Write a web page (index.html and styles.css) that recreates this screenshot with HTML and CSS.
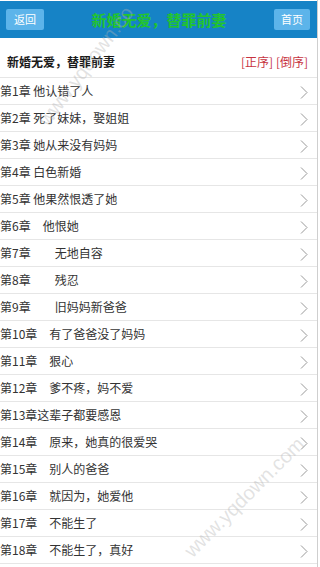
FILE: index.html
```html
<!DOCTYPE html>
<html lang="zh-CN">
<head>
<meta charset="utf-8">
<title>新婚无爱，替罪前妻</title>
<link rel="stylesheet" href="styles.css">
</head>
<body>
<div class="page">
  <header class="topbar">
    <a class="btn btn-back" href="#">返回</a>
    <h1 class="title">新婚无爱，替罪前妻</h1>
    <a class="btn btn-home" href="#">首页</a>
  </header>
  <div class="bookhead">
    <h2 class="bookname">新婚无爱，替罪前妻</h2>
    <div class="order"><a href="#">[正序]</a> <a href="#">[倒序]</a></div>
  </div>
  <ul class="chapters">
    <li><a href="#"><span class="name">第1章 他认错了人</span><svg class="chev" viewBox="0 0 8 13"><polyline points="1,0.5 7,6.5 1,12.5"/></svg></a></li>
    <li><a href="#"><span class="name">第2章 死了妹妹，娶姐姐</span><svg class="chev" viewBox="0 0 8 13"><polyline points="1,0.5 7,6.5 1,12.5"/></svg></a></li>
    <li><a href="#"><span class="name">第3章 她从来没有妈妈</span><svg class="chev" viewBox="0 0 8 13"><polyline points="1,0.5 7,6.5 1,12.5"/></svg></a></li>
    <li><a href="#"><span class="name">第4章 白色新婚</span><svg class="chev" viewBox="0 0 8 13"><polyline points="1,0.5 7,6.5 1,12.5"/></svg></a></li>
    <li><a href="#"><span class="name">第5章 他果然恨透了她</span><svg class="chev" viewBox="0 0 8 13"><polyline points="1,0.5 7,6.5 1,12.5"/></svg></a></li>
    <li><a href="#"><span class="name">第6章　他恨她</span><svg class="chev" viewBox="0 0 8 13"><polyline points="1,0.5 7,6.5 1,12.5"/></svg></a></li>
    <li><a href="#"><span class="name">第7章　　无地自容</span><svg class="chev" viewBox="0 0 8 13"><polyline points="1,0.5 7,6.5 1,12.5"/></svg></a></li>
    <li><a href="#"><span class="name">第8章　　残忍</span><svg class="chev" viewBox="0 0 8 13"><polyline points="1,0.5 7,6.5 1,12.5"/></svg></a></li>
    <li><a href="#"><span class="name">第9章　　旧妈妈新爸爸</span><svg class="chev" viewBox="0 0 8 13"><polyline points="1,0.5 7,6.5 1,12.5"/></svg></a></li>
    <li><a href="#"><span class="name">第10章　有了爸爸没了妈妈</span><svg class="chev" viewBox="0 0 8 13"><polyline points="1,0.5 7,6.5 1,12.5"/></svg></a></li>
    <li><a href="#"><span class="name">第11章　狠心</span><svg class="chev" viewBox="0 0 8 13"><polyline points="1,0.5 7,6.5 1,12.5"/></svg></a></li>
    <li><a href="#"><span class="name">第12章　爹不疼，妈不爱</span><svg class="chev" viewBox="0 0 8 13"><polyline points="1,0.5 7,6.5 1,12.5"/></svg></a></li>
    <li><a href="#"><span class="name">第13章这辈子都要感恩</span><svg class="chev" viewBox="0 0 8 13"><polyline points="1,0.5 7,6.5 1,12.5"/></svg></a></li>
    <li><a href="#"><span class="name">第14章　原来，她真的很爱哭</span><svg class="chev" viewBox="0 0 8 13"><polyline points="1,0.5 7,6.5 1,12.5"/></svg></a></li>
    <li><a href="#"><span class="name">第15章　别人的爸爸</span><svg class="chev" viewBox="0 0 8 13"><polyline points="1,0.5 7,6.5 1,12.5"/></svg></a></li>
    <li><a href="#"><span class="name">第16章　就因为，她爱他</span><svg class="chev" viewBox="0 0 8 13"><polyline points="1,0.5 7,6.5 1,12.5"/></svg></a></li>
    <li><a href="#"><span class="name">第17章　不能生了</span><svg class="chev" viewBox="0 0 8 13"><polyline points="1,0.5 7,6.5 1,12.5"/></svg></a></li>
    <li><a href="#"><span class="name">第18章　不能生了，真好</span><svg class="chev" viewBox="0 0 8 13"><polyline points="1,0.5 7,6.5 1,12.5"/></svg></a></li>
  </ul>
  <div class="wm wm-top">www.yqdown.co</div>
  <div class="wm wm-bottom">www.yqdown.com</div>
</div>
</body>
</html>
```
FILE: styles.css
```css
html, body {
  margin: 0;
  padding: 0;
  background: #fff;
}
body {
  font-family: "Noto Sans CJK SC", "Liberation Sans", sans-serif;
  font-size: 12px;
  color: #333;
}
a {
  text-decoration: none;
  color: inherit;
}
.page {
  position: relative;
  width: 317px;
  height: 567px;
  overflow: hidden;
  border-right: 1px solid #cfcfcf;
  background: #fff;
}
.topbar {
  margin-top: 1px;
  height: 37px;
  background: #1683c6;
  display: flex;
  align-items: center;
  justify-content: space-between;
  padding: 0 7px 0 6px;
  box-sizing: border-box;
}
.btn {
  height: 21px;
  line-height: 21px;
  background: #5cb4ea;
  color: #fff;
  font-size: 11px;
  text-align: center;
  border-radius: 2px;
}
.btn-back { width: 38px; }
.btn-home { width: 36px; }
.title {
  margin: 0;
  font-size: 15px;
  font-weight: bold;
  color: #22c42e;
  line-height: 1;
}
.bookhead {
  height: 40px;
  padding: 8px 9px 0 7px;
  box-sizing: border-box;
  border-bottom: 1px solid #e6e6e6;
  display: flex;
  align-items: center;
  justify-content: space-between;
}
.bookname {
  margin: 0;
  font-size: 12px;
  font-weight: bold;
  color: #1a1a1a;
  line-height: 1;
}
.order {
  font-size: 12px;
  color: #c7343f;
  line-height: 1;
}
.chapters {
  list-style: none;
  margin: 0;
  padding: 0;
}
.chapters li {
  height: 27px;
  border-bottom: 1px solid #e6e6e6;
  box-sizing: border-box;
}
.chapters a {
  display: flex;
  align-items: center;
  justify-content: space-between;
  height: 100%;
  padding: 0 9px 0 0;
  box-sizing: border-box;
}
.name {
  color: #333;
  white-space: pre;
  line-height: 1;
}
.chev {
  width: 8px;
  height: 13px;
  margin-top: 2px;
}
.chev polyline {
  fill: none;
  stroke: #999;
  stroke-width: 1;
}
.wm {
  position: absolute;
  font-family: "Liberation Sans", sans-serif;
  font-size: 20px;
  color: rgba(180, 180, 180, 0.38);
  white-space: nowrap;
  pointer-events: none;
  line-height: 1;
}
.wm-bottom {
  left: 164px;
  top: 487px;
  transform: rotate(-45deg);
}
.wm-top {
  left: 14px;
  top: 56px;
  transform: rotate(-53deg);
}
```
